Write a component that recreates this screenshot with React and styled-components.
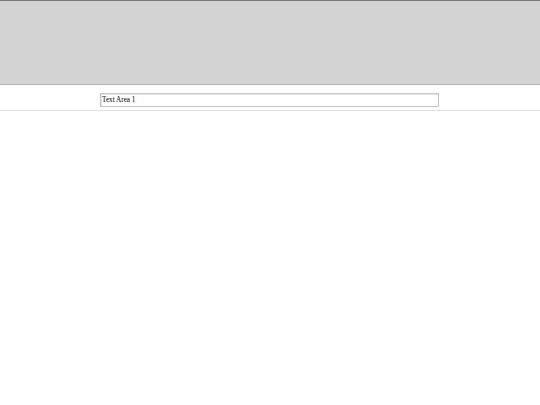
import React from 'react';
import styled, { createGlobalStyle } from 'styled-components';

const GlobalStyle = createGlobalStyle`
  html, body {
    margin: 0;
    padding: 0;
    background: #ffffff;
    font-family: "Liberation Serif", "Times New Roman", serif;
  }
`;

const Header = styled.header`
  height: 83px;
  background: #d3d3d3;
  border-top: 1px solid #7a7a7a;
  border-bottom: 1px solid #b4b4b4;
`;

const FieldRow = styled.section`
  box-sizing: border-box;
  display: flex;
  align-items: flex-start;
  height: 26px;
  padding: 8px 0 0 100px;
  border-bottom: 1px solid #e2e2e2;
`;

const TextField = styled.div`
  box-sizing: border-box;
  width: 339px;
  height: 14px;
  padding: 0 1px;
  border: 1px solid #c4c4c4;
  box-shadow: inset 1px 1px 0 #e6e6e6;
  font-size: 7.2px;
  line-height: 13px;
  color: #000000;
  white-space: nowrap;
`;

export default function App() {
  return (
    <>
      <GlobalStyle />
      <Header />
      <FieldRow>
        <TextField>Text Area 1</TextField>
      </FieldRow>
    </>
  );
}
